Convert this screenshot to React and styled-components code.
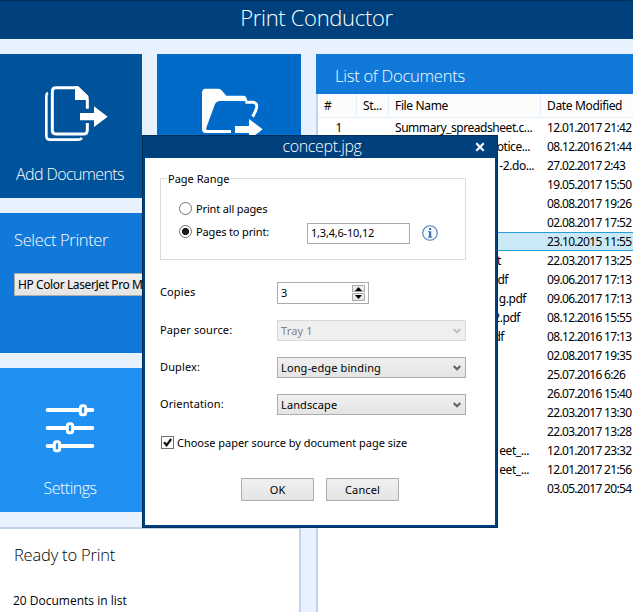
import { useState } from 'react';
import styled, { createGlobalStyle, css } from 'styled-components';

const documents = [
    { num: '1', name: 'Summary_spreadsheet.c...', date: '12.01.2017 21:42' },
    { tail: 'otice...', gap: 11, date: '08.12.2016 21:44' },
    { tail: '-2.do...', gap: 7, date: '27.02.2017 2:43' },
    { date: '19.05.2017 15:50' },
    { date: '08.08.2017 19:26' },
    { date: '02.08.2017 17:52' },
    { date: '23.10.2015 11:55', selected: true },
    { tail: 't', gap: 40, date: '22.03.2017 13:25' },
    { tail: 'df', gap: 33, date: '09.06.2017 17:13' },
    { tail: 'g.pdf', gap: 15, date: '09.06.2017 17:13' },
    { tail: '2.pdf', gap: 21, date: '08.12.2016 15:55' },
    { tail: 'df', gap: 37, date: '08.12.2016 17:13' },
    { date: '02.08.2017 19:35' },
    { date: '25.07.2016 6:26' },
    { date: '26.07.2016 15:40' },
    { date: '22.03.2017 13:30' },
    { date: '22.03.2017 13:28' },
    { tail: 'eet_...', gap: 12, date: '12.01.2017 23:32' },
    { tail: 'eet_...', gap: 12, date: '12.01.2017 21:56' },
    { date: '03.05.2017 20:54' },
];

export default function App() {
    return (
        <>
            <GlobalStyle />
            <Window>
                <TitleBar>Print Conductor</TitleBar>
                <Workspace>
                    <Sidebar>
                        <TileRow>
                            <Tile $color='#00539b'>
                                <AddDocumentsIcon />
                                <TileLabel $spacing='-0.6px'>Add Documents</TileLabel>
                            </Tile>
                            <Tile $color='#006ac8' $wide>
                                <FolderIcon />
                            </Tile>
                        </TileRow>
                        <PrinterPanel>
                            <PanelTitle>Select Printer</PanelTitle>
                            <PrinterSelect>HP Color LaserJet Pro M</PrinterSelect>
                        </PrinterPanel>
                        <TileRow>
                            <Tile $color='#2190f3'>
                                <SettingsIcon />
                                <TileLabel $spacing='-0.5px'>Settings</TileLabel>
                            </Tile>
                        </TileRow>
                        <StatusPanel>
                            <StatusTitle>Ready to Print</StatusTitle>
                            <StatusText>20 Documents in list</StatusText>
                        </StatusPanel>
                    </Sidebar>
                    <DocumentList />
                </Workspace>
                <PrintDialog />
            </Window>
        </>
    );
}

function DocumentList() {
    return (
        <ListPanel>
            <ListTitle>List of Documents</ListTitle>
            <ListBody>
                <HeaderRow>
                    <HeaderCell>#</HeaderCell>
                    <HeaderCell>St...</HeaderCell>
                    <HeaderCell>File Name</HeaderCell>
                    <HeaderCell>Date Modified</HeaderCell>
                </HeaderRow>
                {documents.map((doc, index) => (
                    <Row key={index} $selected={doc.selected}>
                        <NumberCell>{doc.num}</NumberCell>
                        <Cell />
                        {doc.tail ? (
                            <TailCell $gap={doc.gap}>{doc.tail}</TailCell>
                        ) : (
                            <Cell>{doc.name}</Cell>
                        )}
                        <Cell $date>{doc.date}</Cell>
                    </Row>
                ))}
            </ListBody>
        </ListPanel>
    );
}

function PrintDialog() {
    const [range, setRange] = useState('pages');
    const [bySize, setBySize] = useState(true);

    return (
        <Dialog>
            <DialogTitle>
                <span>concept.jpg</span>
                <CloseButton>
                    <svg width='10' height='10' viewBox='0 0 10 10'>
                        <path d='M1.3 1.3L8.7 8.7M8.7 1.3L1.3 8.7' stroke='#fff' strokeWidth='2.2' />
                    </svg>
                </CloseButton>
            </DialogTitle>
            <DialogBody>
                <RangeGroup>
                    <Legend>Page Range</Legend>
                    <RadioRow onClick={() => setRange('all')}>
                        <Radio $checked={range === 'all'} />
                        Print all pages
                    </RadioRow>
                    <PagesRow>
                        <RadioRow onClick={() => setRange('pages')}>
                            <Radio $checked={range === 'pages'} />
                            Pages to print:
                        </RadioRow>
                        <PagesInput>1,3,4,6-10,12</PagesInput>
                        <InfoIcon />
                    </PagesRow>
                </RangeGroup>
                <Field>
                    <Label>Copies</Label>
                    <CopiesInput>
                        3
                        <Spinner>
                            <SpinButton $height='7px'>
                                <svg width='7' height='4' viewBox='0 0 7 4'><path d='M0 4L3.5 0L7 4Z' /></svg>
                            </SpinButton>
                            <SpinButton $height='8px'>
                                <svg width='7' height='4' viewBox='0 0 7 4'><path d='M0 0L3.5 4L7 0Z' /></svg>
                            </SpinButton>
                        </Spinner>
                    </CopiesInput>
                </Field>
                <Field>
                    <Label>Paper source:</Label>
                    <Select $disabled>Tray 1<Chevron /></Select>
                </Field>
                <Field>
                    <Label>Duplex:</Label>
                    <Select>Long-edge binding<Chevron /></Select>
                </Field>
                <Field>
                    <Label>Orientation:</Label>
                    <Select>Landscape<Chevron /></Select>
                </Field>
                <CheckRow onClick={() => setBySize(!bySize)}>
                    <CheckBox>
                        {bySize && (
                            <svg width='11' height='11' viewBox='0 0 11 11'>
                                <path d='M2 5.2L4.6 8.2L9.2 2' fill='none' stroke='#111' strokeWidth='2.2' />
                            </svg>
                        )}
                    </CheckBox>
                    <CheckText>Choose paper source by document page size</CheckText>
                </CheckRow>
                <Buttons>
                    <Button>OK</Button>
                    <Button>Cancel</Button>
                </Buttons>
            </DialogBody>
        </Dialog>
    );
}

const Chevron = () => (
    <svg width='8' height='6' viewBox='0 0 8 6'>
        <path d='M0.7 1L4 4.3L7.3 1' fill='none' stroke='currentColor' strokeWidth='2.1' />
    </svg>
);

const InfoIcon = () => (
    <svg width='16' height='16' viewBox='0 0 16 16'>
        <circle cx='8' cy='8' r='7.3' fill='#f6faff' stroke='#4a80bb' strokeWidth='1.1' />
        <path d='M7 3h2.2v2H7zM6 6.3h3.2v5.4h1v1H6v-1h1V7.3H6z' fill='#3c72ae' />
    </svg>
);

const AddDocumentsIcon = () => (
    <TileIcon width='64' height='58' viewBox='0 0 192 174' $left='45px' $top='31px'>
        <path d='M9 24Q4 26 4 33V152Q4 164 16 164H98Q107 164 111 159' fill='none' stroke='#fff' strokeWidth='8' />
        <path d='M127 71V44M127 114V134Q127 147 115 147H33Q22 147 22 136V19Q22 8 33 8H98L127 36' fill='none' stroke='#fff' strokeWidth='9' />
        <path d='M90 4H99L131 35V45H90Z' fill='#fff' />
        <path d='M105 84H147V64L188 95L147 126V106H105Z' fill='#fff' />
    </TileIcon>
);

const FolderIcon = () => (
    <TileIcon width='64' height='54' viewBox='0 0 192 162' $left='43px' $top='33px'>
        <path d='M9 9Q10 5 16 5H56Q60 5 64 9L79 26H132Q140 27 142 42H58Q49 43 45 51L21 116Q16 129 23 129H93V138H17Q6 138 6 127V16Q6 11 9 9Z' fill='#fff' />
        <path d='M136 46H158Q172 47 170 61Q168 73 158 89' fill='none' stroke='#fff' strokeWidth='9' />
        <path d='M105 117H147V96L188 127L147 158V138H105Z' fill='#fff' />
    </TileIcon>
);

const SettingsIcon = () => (
    <TileIcon width='50' height='50' viewBox='0 0 150 150' $left='45px' $top='35px'>
        <path d='M8 21H142M8 75H142M8 129H142' stroke='#fff' strokeWidth='12' strokeLinecap='round' />
        <g fill='#2190f3' stroke='#fff' strokeWidth='9'>
            <rect x='106' y='8' width='16' height='27' rx='6' />
            <rect x='67' y='62' width='16' height='27' rx='6' />
            <rect x='28' y='116' width='16' height='27' rx='6' />
        </g>
    </TileIcon>
);

const GlobalStyle = createGlobalStyle`
    * {
        box-sizing: border-box;
    }

    body {
        margin: 0;
        font-family: 'Noto Sans', 'Open Sans', sans-serif;
        color: #000;
    }

    svg {
        display: block;
    }
`;

const lightText = css`
    font-family: 'Open Sans', 'Noto Sans', sans-serif;
    font-weight: 300;
    white-space: nowrap;
`;

const buttonFace = css`
    background: linear-gradient(#f0f0f0, #e4e4e4);
    border: 1px solid #acacac;
`;

const Window = styled.div`
    position: relative;
    width: 633px;
    height: 612px;
    overflow: hidden;
    background: #e8f2ff;
`;

const TitleBar = styled.header`
    ${lightText}
    height: 39px;
    border-top: 1px solid #003059;
    background: #00407d;
    color: #fff;
    font-size: 22px;
    line-height: 33px;
    letter-spacing: -0.32px;
    text-align: center;
`;

const Workspace = styled.main`
    display: flex;
    gap: 15px;
    padding-top: 15px;
    height: 573px;
`;

const Sidebar = styled.div`
    display: flex;
    flex-direction: column;
    gap: 15px;
    width: 301px;
    flex-shrink: 0;
`;

const TileRow = styled.div`
    display: flex;
    gap: 15px;
    height: 144px;
    flex-shrink: 0;
`;

const Tile = styled.div`
    display: flex;
    flex-direction: column;
    justify-content: space-between;
    width: ${({ $wide }) => ($wide ? '144px' : '142px')};
    background: ${({ $color }) => $color};
`;

const TileIcon = styled.svg`
    margin: ${({ $top, $left }) => `${$top} 0 0 ${$left}`};
`;

const TileLabel = styled.div`
    ${lightText}
    margin-bottom: 13px;
    padding-right: 2px;
    color: #fff;
    font-size: 16px;
    line-height: 22px;
    letter-spacing: ${({ $spacing }) => $spacing};
    text-align: center;
`;

const PrinterPanel = styled.section`
    height: 140px;
    padding: 15px 14px;
    background: #1079da;
    flex-shrink: 0;
`;

const PanelTitle = styled.div`
    ${lightText}
    color: #fff;
    font-size: 16.5px;
    line-height: 24px;
    letter-spacing: -0.35px;
`;

const PrinterSelect = styled.div`
    ${buttonFace}
    height: 23px;
    margin-top: 21px;
    padding-left: 3px;
    font-size: 12px;
    line-height: 21px;
    letter-spacing: -0.4px;
    white-space: nowrap;
`;

const StatusPanel = styled.section`
    flex: 1;
    padding: 14px 14px 0;
    border-top: 2px solid #c1d2ea;
    border-right: 2px solid #c1d2ea;
    background: #fff;
`;

const StatusTitle = styled.div`
    ${lightText}
    font-size: 16.5px;
    line-height: 24px;
    letter-spacing: -0.2px;
`;

const StatusText = styled.div`
    margin: 25px 0 0 -1px;
    font-family: 'Open Sans', sans-serif;
    font-size: 12px;
    line-height: 18px;
`;

const ListPanel = styled.section`
    display: flex;
    flex-direction: column;
    flex: 1;
    min-width: 0;
`;

const ListTitle = styled.div`
    ${lightText}
    height: 40px;
    padding-left: 19px;
    background: #1079da;
    color: #fff;
    font-size: 16.5px;
    line-height: 44px;
    letter-spacing: -0.25px;
`;

const ListBody = styled.div`
    flex: 1;
    border-left: 2px solid #c1d2ea;
    background: #fff;
    font-size: 12px;
`;

const columns = css`
    display: grid;
    grid-template-columns: 39px 32px 152px 1fr;
`;

const HeaderRow = styled.div`
    ${columns}
    height: 24px;
    border-bottom: 1px solid #e5f0fb;
    background: #fcfcfc;
`;

const HeaderCell = styled.div`
    padding-left: 6px;
    border-right: 1px solid #e3eefa;
    line-height: 23px;
    letter-spacing: -0.35px;
    white-space: nowrap;

    &:last-child {
        border-right: 0;
    }
`;

const Row = styled.div`
    ${columns}
    height: 19px;
    line-height: 19px;
    white-space: nowrap;
    ${({ $selected }) => $selected && css`
        background: #cbe8f6;
        box-shadow: inset 0 1px #26a0da, inset 0 -1px #26a0da;
    `}
`;

const Cell = styled.div`
    padding-left: 6px;
    letter-spacing: ${({ $date }) => ($date ? '-0.67px' : '-0.45px')};
`;

const NumberCell = styled(Cell)`
    padding: 0 15px 0 0;
    text-align: right;
`;

const TailCell = styled(Cell)`
    padding: 0 ${({ $gap }) => $gap}px 0 0;
    text-align: right;
`;

const Dialog = styled.div`
    position: absolute;
    left: 142px;
    top: 135px;
    width: 356px;
    height: 393px;
    border: 1px solid #003059;
    background: #00407d;
    padding: 0 2px 2px;
`;

const DialogTitle = styled.div`
    ${lightText}
    display: grid;
    grid-template-columns: 1fr auto 1fr;
    align-items: center;
    height: 22px;
    color: #fff;
    font-size: 16px;
    line-height: 20px;
    letter-spacing: -0.35px;

    span {
        grid-column: 2;
        padding: 0 0 2px 4px;
    }
`;

const CloseButton = styled.div`
    justify-self: end;
    margin-right: 10px;
`;

const DialogBody = styled.div`
    display: flex;
    flex-direction: column;
    height: 367px;
    padding: 20px 29px 0 15px;
    background: #fff;
    font-size: 11px;
    letter-spacing: 0.12px;
    white-space: nowrap;
`;

const RangeGroup = styled.div`
    height: 82px;
    margin-bottom: 22px;
    padding: 0 0 0 18px;
    border: 1px solid #dcdcdc;
`;

const Legend = styled.div`
    width: fit-content;
    height: 16px;
    margin: -8px 0 14px -12px;
    padding: 0 1px;
    background: #fff;
    line-height: 16px;
    letter-spacing: 0;
`;

const RadioRow = styled.div`
    display: flex;
    align-items: center;
    gap: 4px;
    height: 15px;
    line-height: 15px;
    letter-spacing: -0.15px;
`;

const Radio = styled.span`
    width: 13px;
    height: 13px;
    border: 1px solid #707070;
    border-radius: 50%;
    background: ${({ $checked }) => ($checked ? 'radial-gradient(circle, #1c1c1c 3.2px, #fff 4px)' : '#fff')};
`;

const PagesRow = styled.div`
    display: grid;
    grid-template-columns: 128px 103px 16px;
    height: 21px;
    margin-top: 7px;

    ${RadioRow} {
        margin-top: 1px;
    }

    > svg {
        margin: 2px 0 0 12px;
        overflow: visible;
    }
`;

const PagesInput = styled.div`
    height: 21px;
    padding-left: 3px;
    border: 1px solid #acacac;
    line-height: 18px;
    letter-spacing: -0.2px;
`;

const Field = styled.div`
    display: grid;
    grid-template-columns: 117px auto;
    justify-content: start;
    align-items: center;
    margin-bottom: 16px;
`;

const Label = styled.div`
    padding-bottom: 2px;
    line-height: 16px;
`;

const CopiesInput = styled.div`
    display: flex;
    justify-content: space-between;
    width: 92px;
    height: 22px;
    padding: 2px 3px 0 3px;
    border: 1px solid #acacac;
    line-height: 15px;
`;

const Spinner = styled.div`
    display: flex;
    flex-direction: column;
    gap: 1px;
`;

const SpinButton = styled.div`
    ${buttonFace}
    display: flex;
    align-items: center;
    justify-content: center;
    width: 13px;
    height: ${({ $height }) => $height};
`;

const Select = styled.div`
    ${buttonFace}
    display: flex;
    align-items: center;
    justify-content: space-between;
    width: 189px;
    height: 21px;
    padding: 0 4px 0 3px;
    ${({ $disabled }) => $disabled && css`
        border-color: #d9d9d9;
        background: #efefef;
        color: #838383;
    `}

    svg {
        color: ${({ $disabled }) => ($disabled ? '#bfbfbf' : '#606060')};
    }
`;

const CheckRow = styled.div`
    display: flex;
    align-items: center;
    gap: 3px;
    height: 15px;
    margin: 4px 0 28px 1px;
`;

const CheckBox = styled.span`
    width: 13px;
    height: 13px;
    border: 1px solid #707070;
    background: #fff;
`;

const CheckText = styled.span`
    line-height: 15px;
    letter-spacing: -0.02px;
`;

const Buttons = styled.div`
    display: flex;
    gap: 12px;
    padding-left: 81px;
`;

const Button = styled.button`
    ${buttonFace}
    width: 73px;
    height: 23px;
    padding: 0;
    font: inherit;
    letter-spacing: inherit;
    color: #000;
`;
